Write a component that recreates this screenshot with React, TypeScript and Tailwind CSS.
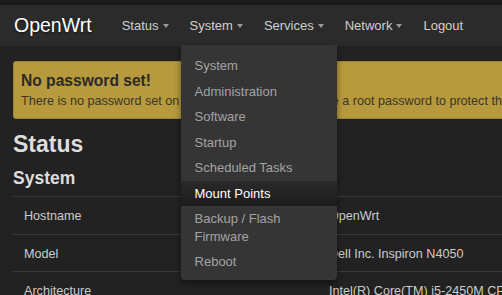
import React from "react";

const Caret = () => (
  <span className="inline-block w-0 h-0 border-l-[3.5px] border-r-[3.5px] border-t-[4px] border-l-transparent border-r-transparent border-t-[#9a9a9a] mt-[1px]" />
);

const navItems = [
  { label: "Status", caret: true },
  { label: "System", caret: true, open: true },
  { label: "Services", caret: true },
  { label: "Network", caret: true },
  { label: "Logout", caret: false },
];

const menu = [
  { label: "System" },
  { label: "Administration" },
  { label: "Software" },
  { label: "Startup" },
  { label: "Scheduled Tasks" },
  { label: "Mount Points", active: true },
  { label: "Backup / Flash Firmware" },
  { label: "Reboot" },
];

const rows = [
  ["Hostname", "OpenWrt"],
  ["Model", "Dell Inc. Inspiron N4050"],
  ["Architecture", "Intel(R) Core(TM) i5-2450M CPU @ 2.50GHz"],
];

export default function App() {
  return (
    <div className="w-[502px] h-[295px] overflow-hidden bg-[#222222] font-['Liberation_Sans',Arial,sans-serif]">
      <div className="h-[5px] bg-[#1b1b1b]" />
      <header className="h-[41px] bg-[#2b2b2b] flex items-center pl-[14px] w-[1000px]">
        <div className="text-[19.5px] leading-none text-white mr-[19.5px] [text-shadow:0_1px_2px_rgba(0,0,0,0.6)]">
          OpenWrt
        </div>
        <nav className="flex h-full">
          {navItems.map((n) => (
            <div key={n.label} className="relative h-full flex items-center px-[10.5px]">
              <span className="flex items-center gap-[4px] text-[13px] text-[#cfcfcf]">
                {n.label}
                {n.caret && <Caret />}
              </span>
              {n.open && (
                <div className="absolute left-[1.5px] top-[40px] w-[156px] bg-[#353535] rounded-b-[4px] pt-[8px] pb-[5px] shadow-[0_3px_6px_rgba(0,0,0,0.45)] z-10">
                  {menu.map((m) => (
                    <div
                      key={m.label}
                      className={
                        m.active
                          ? "px-[14px] py-[4px] text-[13px] leading-[17.5px] text-white bg-gradient-to-b from-[#2a2a2a] to-[#1c1c1c]"
                          : "px-[14px] py-[4px] text-[13px] leading-[17.5px] text-[#a3a3a3]"
                      }
                    >
                      {m.label}
                    </div>
                  ))}
                </div>
              )}
            </div>
          ))}
        </nav>
      </header>
      <main className="w-[1000px] pl-[13px]">
        <div className="mt-[15px] w-[700px] h-[58px] bg-[#b69a3d] rounded-[3px] border border-[#9c8434] pl-[7px] pt-[9px]">
          <div className="text-[15.6px] font-bold leading-[20px] text-[#2a2a2a]">No password set!</div>
          <div className="text-[12.6px] leading-[21px] text-[#3d3623]">
            There is no password set on this router. Please configure a root password to protect the web interface.
          </div>
        </div>
        <h2 className="mt-[11px] text-[23px] font-bold leading-[28px] text-[#dddddd]">Status</h2>
        <h3 className="mt-[9px] text-[17.5px] font-bold leading-[22px] text-[#dddddd]">System</h3>
        <div className="mt-[7px] w-[700px]">
          {rows.map(([k, v]) => (
            <div key={k} className="flex border-t border-[#393939] pt-[10px] pb-[8.5px] text-[12.6px] leading-[18px] text-[#cccccc]">
              <div className="w-[316px] pl-[11px]">{k}</div>
              <div>{v}</div>
            </div>
          ))}
        </div>
      </main>
    </div>
  );
}
